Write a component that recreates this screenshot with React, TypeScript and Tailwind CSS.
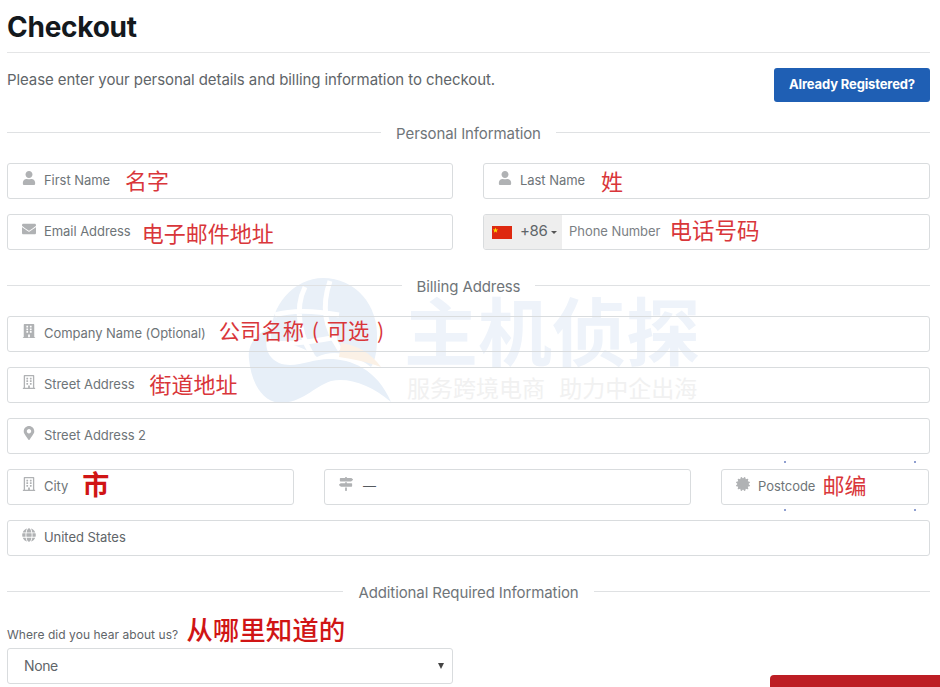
import React from "react";
import { FaUser, FaEnvelope, FaBuilding, FaRegBuilding, FaMapMarkerAlt, FaMapSigns, FaCertificate, FaGlobe } from "react-icons/fa";

const font = { fontFamily: 'Inter, "Noto Sans CJK SC", sans-serif' };

function Divider({ title, className }: { title: string; className: string }) {
  return (
    <div className={`flex items-center gap-[15px] h-5 ${className}`}>
      <div className="flex-1 h-px bg-[#dfe1e3]" />
      <span className="text-[15px] leading-5 text-[#6f7579] translate-y-[2px] tracking-[-0.1px]">{title}</span>
      <div className="flex-1 h-px bg-[#dfe1e3]" />
    </div>
  );
}

function Note({ children, className }: { children: React.ReactNode; className: string }) {
  return <span className={`leading-none whitespace-nowrap font-['Noto_Sans_CJK_SC',sans-serif] ${className}`}>{children}</span>;
}

function Field({ icon, label, children, className = "", labelClass = "text-[#6e7478]" }: { icon: React.ReactNode; label: string; children?: React.ReactNode; className?: string; labelClass?: string }) {
  return (
    <div className={`h-9 border border-[#d9dcde] rounded-[3px] flex items-center pl-[13px] ${className}`}>
      <span className="w-[15px] h-[15px] flex items-center justify-center text-[#b0b2b4] text-[14px] -translate-y-[3px]">{icon}</span>
      <span className={`ml-[8px] text-[13px] leading-none whitespace-nowrap tracking-[-0.05px] -translate-y-px ${labelClass}`}>{label}</span>
      {children}
    </div>
  );
}

function Watermark() {
  return (
    <div className="absolute left-[245px] top-[277px] flex gap-[11px] pointer-events-none select-none">
      <svg width="148" height="127" viewBox="0 0 148 127" className="shrink-0">
        <path d="M26 62 C24 28 50 1 78 1 C110 1 134 28 132 62 C132 74 130 84 126 90 C108 76 88 72 72 80 C60 70 42 66 26 62Z" fill="#e9f0f8" />
        <path d="M60 10 C50 30 52 60 75 90 M85 4 C76 30 80 50 95 73 M30 38 C50 32 72 34 94 38 M27 66 C48 68 72 64 92 60" stroke="#fff" strokeWidth="5" fill="none" />
        <path d="M4 82 C2 66 14 54 26 52 C18 64 20 80 34 86 C50 92 66 82 84 82 C106 82 132 92 146 125 C126 108 104 100 86 104 C68 110 58 126 34 126 C16 124 6 104 4 82Z" fill="#e7eff8" />
        <path d="M96 66 C112 68 126 76 136 90 C120 84 106 82 94 80Z" fill="#fbf1e6" />
      </svg>
      <div className="flex flex-col items-start font-['Noto_Sans_CJK_SC',sans-serif]">
        <div className="text-[74px] leading-[64px] mt-[19px] font-bold text-[#eef3fa] whitespace-nowrap">主机侦探</div>
        <div className="text-[23px] leading-6 mt-[15px] ml-[3px] text-[#f1f1f1] whitespace-nowrap [word-spacing:9px]">服务跨境电商 助力中企出海</div>
      </div>
    </div>
  );
}

function Dots() {
  const marks = ["left-[63px] top-[-8px]", "left-[193px] top-[-8px]", "left-[63px] top-[40px]", "left-[193px] top-[40px]"];
  return (
    <>
      {marks.map((m) => (
        <span key={m} className={`absolute w-[2px] h-[2px] bg-[#8f9fd0] ${m}`} />
      ))}
    </>
  );
}

export default function App() {
  return (
    <div className="relative w-[940px] h-[687px] overflow-hidden bg-white" style={font}>
      <Watermark />
      <div className="relative pl-[7px] pr-[10px]">
        <div className="h-[52px] flex items-center border-b border-[#e4e5e6] box-content">
          <h1 className="text-[28px] leading-none font-bold text-[#14191d] tracking-[-0.25px] translate-y-px">Checkout</h1>
        </div>
        <div className="mt-[15px] flex justify-between items-start">
          <p className="text-[15px] leading-6 text-[#5f6569] tracking-[-0.08px]">Please enter your personal details and billing information to checkout.</p>
          <button className="w-[156px] h-[34px] bg-[#1f5fb4] text-white rounded-[3px] text-[13px] font-bold tracking-[-0.14px]">Already Registered?</button>
        </div>

        <Divider title="Personal Information" className="mt-[20px]" />
        <div className="mt-[21px] grid grid-cols-[446px_447px] gap-x-[30px] gap-y-[15px]">
          <Field icon={<FaUser />} label="First Name"><Note className="ml-[15px] text-[22px] text-[#d9363a] -translate-y-[2px]">名字</Note></Field>
          <Field icon={<FaUser />} label="Last Name"><Note className="ml-[16px] text-[22px] text-[#d9363a] -translate-y-px">姓</Note></Field>
          <Field icon={<FaEnvelope />} label="Email Address"><Note className="ml-[11px] text-[22px] text-[#d9363a]">电子邮件地址</Note></Field>
          <div className="h-9 border border-[#d9dcde] rounded-[3px] flex items-center overflow-hidden">
            <div className="w-[78px] h-full bg-[#eeeeee] flex items-center pl-2 shrink-0">
              <svg width="20" height="13" viewBox="0 0 20 13" className="shrink-0">
                <rect width="20" height="13" fill="#de2910" />
                <path d="M3.5 1.5l.7 2h2l-1.6 1.2.6 2-1.7-1.2-1.7 1.2.6-2L.8 3.5h2z" fill="#ffde00" />
              </svg>
              <span className="ml-2 text-[15px] text-[#5f6569] tracking-[-0.3px] -translate-y-px">+86</span>
              <span className="ml-[3px] w-0 h-0 border-x-[3px] border-x-transparent border-t-[3px] border-t-[#555]" />
            </div>
            <span className="ml-[7px] text-[13px] leading-none text-[#7b8084] whitespace-nowrap tracking-[-0.05px] -translate-y-px">Phone Number</span>
            <Note className="ml-[9px] text-[22.5px] text-[#d9363a] -translate-y-[3px]">电话号码</Note>
          </div>
        </div>

        <Divider title="Billing Address" className="mt-[25px]" />
        <div className="mt-[21px] flex flex-col gap-[15px]">
          <Field icon={<FaBuilding />} label="Company Name (Optional)"><Note className="ml-[13px] text-[21.3px] text-[#d9363a] -translate-y-[4px] [word-spacing:3px]">公司名称 ( 可选 )</Note></Field>
          <Field icon={<FaRegBuilding />} label="Street Address"><Note className="ml-[15px] text-[22px] text-[#d9363a] -translate-y-[2px]">街道地址</Note></Field>
          <Field icon={<FaMapMarkerAlt />} label="Street Address 2" />
          <div className="flex gap-[30px]">
            <Field className="w-[287px]" icon={<FaRegBuilding />} label="City"><Note className="ml-[14px] text-[27px] font-bold text-[#d01515] -translate-y-[4px]">市</Note></Field>
            <Field className="w-[367px]" icon={<FaMapSigns />} label="—" labelClass="text-[#555a5e] ml-[10px]" />
            <div className="relative">
              <Dots />
              <Field className="w-[208px]" icon={<FaCertificate />} label="Postcode"><Note className="ml-[7px] text-[22px] text-[#d9363a] -translate-y-[3px]">邮编</Note></Field>
            </div>
          </div>
          <Field icon={<FaGlobe />} label="United States" labelClass="text-[#5f6569]" />
        </div>

        <Divider title="Additional Required Information" className="mt-[25px]" />
        <div className="mt-[12px] h-[32px] flex items-end">
          <label className="text-[12px] leading-[18px] text-[#5f6569] tracking-[0.05px] mb-px">Where did you hear about us?</label>
          <Note className="ml-[8px] text-[26.5px] font-medium text-[#d01515] mb-[3px]">从哪里知道的</Note>
        </div>
        <div className="mt-[3px] w-[446px] h-9 border border-[#d9dcde] rounded-[3px] flex items-center justify-between pl-[16px] pr-[8px]">
          <span className="text-[14px] text-[#5f6569] tracking-[-0.4px] -translate-y-px">None</span>
          <span className="w-0 h-0 border-x-[3px] border-x-transparent border-t-[6px] border-t-[#444]" />
        </div>
      </div>
      <div className="absolute left-[770px] top-[675px] w-[170px] h-3 bg-[#bd1e24] rounded-tl-[4px]" />
    </div>
  );
}
